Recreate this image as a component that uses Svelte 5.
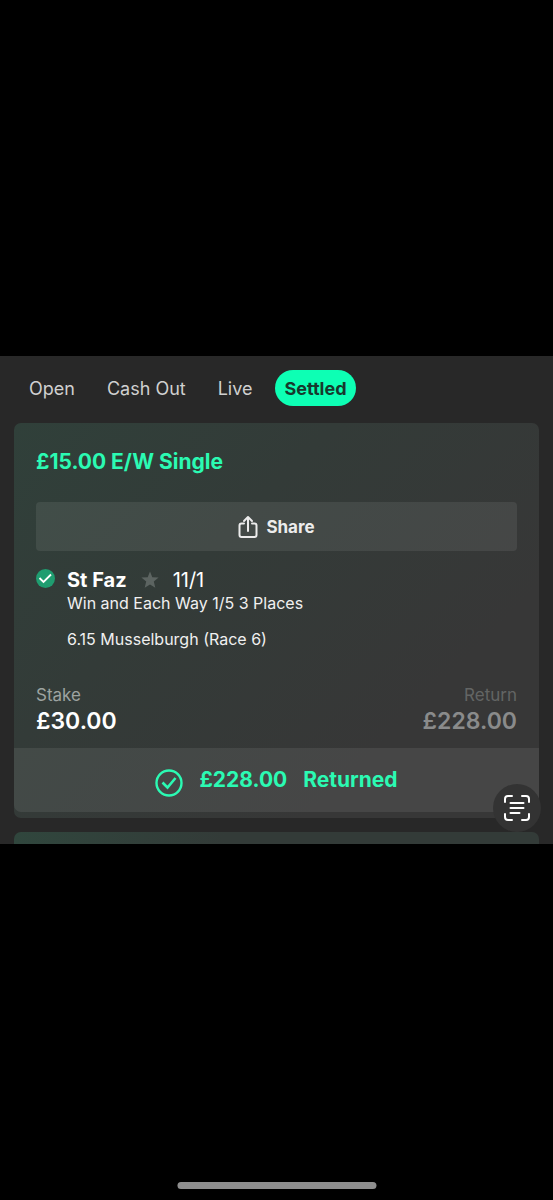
<script lang="ts">
  interface Bet {
    title: string;
    selection: string;
    odds: string;
    market: string;
    event: string;
    stake: string;
    returned: string;
  }

  const tabs = ["Open", "Cash Out", "Live", "Settled"];
  let active = $state("Settled");

  const bet: Bet = {
    title: "£15.00 E/W Single",
    selection: "St Faz",
    odds: "11/1",
    market: "Win and Each Way 1/5 3 Places",
    event: "6.15 Musselburgh (Race 6)",
    stake: "£30.00",
    returned: "£228.00",
  };
</script>

<div class="screen">
  <main class="panel">
    <nav class="tabs">
      {#each tabs as tab (tab)}
        <button class="tab" class:active={tab === active} onclick={() => (active = tab)}>{tab}</button>
      {/each}
    </nav>

    <article class="card">
      <div class="body">
        <h2 class="title">{bet.title}</h2>

        <button class="share">
          <svg width="20" height="24" viewBox="0 0 20 24" fill="none" stroke="currentColor" stroke-width="2" stroke-linecap="round" stroke-linejoin="round">
            <path d="M6 8.5H3.5a2 2 0 0 0-2 2V20a2 2 0 0 0 2 2h13a2 2 0 0 0 2-2v-9.500a2 2 0 0 0-2-2H14" />
            <path d="M10 16V2.500M6 6l4-4 4 4" />
          </svg>
          Share
        </button>

        <div class="selection">
          <svg class="won" width="19" height="19" viewBox="0 0 19 19" fill="none">
            <circle cx="9.5" cy="9.5" r="9.5" fill="#1f9d70" />
            <path d="M3.500 9l4 4 7.500-7.500" stroke="#fff" stroke-width="1.800" />
          </svg>
          <div>
            <div class="runner">
              <span class="name">{bet.selection}</span>
              <svg width="18" height="18" viewBox="0 0 18 18" fill="#5c6461">
                <path d="M9 0.500l2.300 5.700 6.300.4-4.800 4 1.500 6.200L9 13.500l-5.300 3.300 1.500-6.200-4.800-4 6.300-.4z" />
              </svg>
              <span class="odds">{bet.odds}</span>
            </div>
            <p class="line">{bet.market}</p>
            <p class="line event">{bet.event}</p>
          </div>
        </div>

        <dl class="totals">
          <div>
            <dt>Stake</dt>
            <dd>{bet.stake}</dd>
          </div>
          <div class="return">
            <dt>Return</dt>
            <dd>{bet.returned}</dd>
          </div>
        </dl>
      </div>

      <footer class="result">
        <svg width="28" height="28" viewBox="0 0 28 28" fill="none" stroke="currentColor">
          <circle cx="14" cy="14" r="12.5" stroke-width="2.4" />
          <path d="M7.500 13.500l5 5 8-9.500" stroke-width="2.600" />
        </svg>
        <span>{bet.returned}</span>
        <span>Returned</span>
      </footer>
    </article>

    <div class="card next"></div>

    <button class="scan" aria-label="Scan text">
      <svg width="28" height="28" viewBox="0 0 28 28" fill="none" stroke="currentColor" stroke-width="2" stroke-linecap="round">
        <path d="M2 8V5a3 3 0 0 1 3-3h4M19 2h4a3 3 0 0 1 3 3v3M26 20v3a3 3 0 0 1-3 3h-4M9 26H5a3 3 0 0 1-3-3v-3" />
        <path d="M7.500 9h13M7.500 14h13M7.500 19h9" />
      </svg>
    </button>
  </main>

  <div class="home"></div>
</div>

<style>
  :global(body) {
    margin: 0;
    background: #000;
  }
  .screen {
    position: relative;
    display: flex;
    flex-direction: column;
    justify-content: center;
    min-height: 100vh;
    font-family: Inter, "Liberation Sans", sans-serif;
    color: #fff;
  }
  button {
    border: 0;
    font: inherit;
    color: inherit;
    cursor: pointer;
  }
  h2,
  p,
  dl,
  dd {
    margin: 0;
  }
  .panel {
    position: relative;
    padding: 14px 14px 0;
    background: #282828;
  }
  .tabs {
    display: flex;
    gap: 14px;
    padding-left: 6px;
    margin-bottom: 17px;
  }
  .tab {
    height: 36px;
    padding: 0 9px;
    border-radius: 18px;
    background: none;
    font-size: 18px;
    color: #d0d0d0;
  }
  .tab.active {
    background: #0dffb4;
    font-weight: 700;
    color: #17392d;
  }
  .card {
    border-radius: 7px;
    background: linear-gradient(135deg, #30403a 0%, #333b38 35%, #373737 75%);
    overflow: hidden;
  }
  .body {
    padding: 25px 22px 11px;
  }
  .title {
    margin-bottom: 26px;
    font-size: 21px;
    line-height: 28px;
    font-weight: 700;
    color: #2bfab3;
  }
  .share {
    display: flex;
    align-items: center;
    justify-content: center;
    gap: 8px;
    width: 100%;
    height: 49px;
    border-radius: 4px;
    background: #ffffff14;
    font-size: 17px;
    font-weight: 700;
    color: #ececec;
  }
  .selection {
    display: flex;
    gap: 12px;
    margin-top: 17px;
  }
  .won {
    margin-top: 1px;
  }
  .runner {
    display: flex;
    align-items: center;
    gap: 14px;
    font-size: 20px;
    line-height: 24px;
  }
  .name {
    font-weight: 700;
  }
  .line {
    font-size: 16px;
    line-height: 22px;
    color: #f0f0f0;
  }
  .event {
    margin-top: 14px;
  }
  .totals {
    display: flex;
    justify-content: space-between;
    margin-top: 34px;
  }
  .totals dt {
    font-size: 17px;
    line-height: 22px;
    color: #9da3a1;
  }
  .totals dd {
    font-size: 23px;
    line-height: 31px;
    font-weight: 600;
  }
  .totals .return {
    text-align: right;
  }
  .return dt {
    color: #636564;
  }
  .return dd {
    color: #8a8b8b;
  }
  .result {
    display: flex;
    align-items: flex-start;
    justify-content: center;
    gap: 16px;
    padding: 21px 0 15px;
    margin-bottom: 6px;
    border-radius: 0 0 7px 7px;
    background: #ffffff14;
    font-size: 21px;
    line-height: 22px;
    font-weight: 700;
    color: #2bfab3;
  }
  .next {
    height: 12px;
    margin-top: 14px;
    border-radius: 7px 7px 0 0;
    background: linear-gradient(90deg, #30463d, #333b38 40%);
  }
  .scan {
    position: absolute;
    right: 12px;
    bottom: 12px;
    display: grid;
    place-items: center;
    width: 48px;
    height: 48px;
    padding: 0;
    border-radius: 50%;
    background: #333;
  }
  .home {
    position: absolute;
    bottom: 11px;
    left: 50%;
    width: 36%;
    height: 7px;
    border-radius: 4px;
    background: #8e8e8e;
    transform: translateX(-50%);
  }
</style>
